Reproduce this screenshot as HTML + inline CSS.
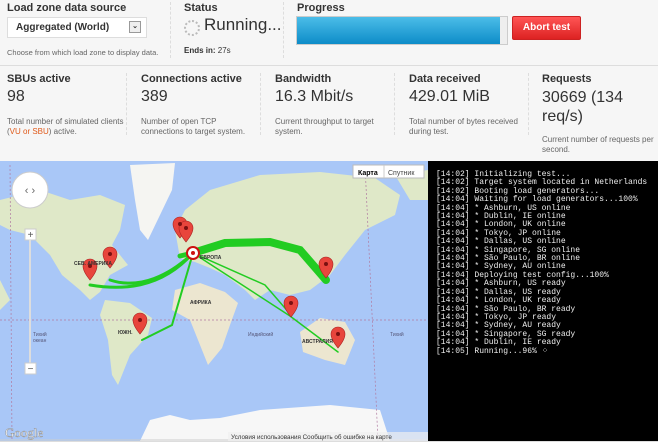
<!DOCTYPE html>
<html><head><meta charset="utf-8"><style>
*{margin:0;padding:0;box-sizing:border-box}
body{width:658px;height:447px;overflow:hidden;background:#f6f6f6;font-family:"Liberation Sans",Arial,sans-serif;color:#333;position:relative}
.a{position:absolute}
.h{font-size:11px;font-weight:bold;color:#333}
.s{font-size:8px;color:#666;line-height:10px}
.v{font-size:16px;color:#333}
.vl{border-left:1px dashed #ddd}
pre{font-family:"Liberation Mono",monospace;font-size:8px;line-height:8.4px;color:#eee}
</style></head><body>
<div class="a h" style="left:7px;top:2px">Load zone data source</div>
<div class="a" style="left:7px;top:17px;width:140px;height:21px;background:#fff;border:1px solid #ddd;font-size:10px;font-weight:bold;padding:4px 0 0 8px">Aggregated (World)
<div class="a" style="left:121px;top:3px;width:12px;height:12px;border:1px solid #999;background:#eee;font-size:7px;text-align:center;line-height:10px">&#8964;</div></div>
<div class="a s" style="left:7px;top:48px;font-size:7.5px">Choose from which load zone to display data.</div>
<div class="a vl" style="left:170px;top:2px;height:56px"></div>
<div class="a h" style="left:184px;top:2px">Status</div>
<div class="a" style="left:184px;top:20px;width:16px;height:16px;border:2px dotted #bbb;border-radius:50%"></div>
<div class="a" style="left:204px;top:15px;font-size:17px;color:#333">Running...</div>
<div class="a" style="left:184px;top:46px;font-size:8px;font-weight:bold">Ends in: <span style="font-weight:normal">27s</span></div>
<div class="a vl" style="left:283px;top:2px;height:56px"></div>
<div class="a h" style="left:297px;top:2px">Progress</div>
<div class="a" style="left:296px;top:16px;width:212px;height:29px;background:#eee;border:1px solid #ccc"><div style="width:203px;height:27px;background:linear-gradient(#4bbde8,#0d8cc8)"></div></div>
<div class="a" style="left:512px;top:16px;width:69px;height:24px;background:linear-gradient(#f55,#d22);border:1px solid #c22;border-radius:2px;color:#fff;font-size:10px;font-weight:bold;text-align:center;line-height:22px">Abort test</div>
<div class="a" style="left:0;top:65px;width:658px;height:1px;background:#ddd"></div>

<div class="a h" style="left:7px;top:73px">SBUs active</div>
<div class="a v" style="left:7px;top:88px">98</div>
<div class="a s" style="left:7px;top:117px">Total number of simulated clients<br>(<span style="color:#e05a1a">VU or SBU</span>) active.</div>
<div class="a vl" style="left:126px;top:73px;height:62px"></div>
<div class="a h" style="left:141px;top:73px">Connections active</div>
<div class="a v" style="left:141px;top:88px">389</div>
<div class="a s" style="left:141px;top:117px">Number of open TCP<br>connections to target system.</div>
<div class="a vl" style="left:260px;top:73px;height:62px"></div>
<div class="a h" style="left:275px;top:73px">Bandwidth</div>
<div class="a v" style="left:275px;top:88px">16.3 Mbit/s</div>
<div class="a s" style="left:275px;top:117px">Current throughput to target<br>system.</div>
<div class="a vl" style="left:394px;top:73px;height:62px"></div>
<div class="a h" style="left:409px;top:73px">Data received</div>
<div class="a v" style="left:409px;top:88px">429.01 MiB</div>
<div class="a s" style="left:409px;top:117px">Total number of bytes received<br>during test.</div>
<div class="a vl" style="left:528px;top:73px;height:62px"></div>
<div class="a h" style="left:542px;top:73px">Requests</div>
<div class="a v" style="left:542px;top:88px;line-height:19px">30669 (134<br>req/s)</div>
<div class="a s" style="left:542px;top:135px">Current number of requests per<br>second.</div>

<svg class="a" style="left:0;top:161px" width="428" height="280" viewBox="0 161 428 280">
<rect x="0" y="161" width="428" height="280" fill="#a9c7f7"/>
<g fill="#dfe8c8">
<path d="M0 200 L40 190 L70 200 L100 195 L125 205 L120 230 L112 245 L128 265 L110 275 L100 292 L90 300 L80 290 L62 275 L50 255 L30 235 L10 230 L0 225Z"/>
<path d="M130 165 L175 163 L172 190 L160 215 L148 240 L140 230 L135 200Z" fill="#f5f5f2"/>
<path d="M105 300 L130 303 L152 318 L148 335 L130 355 L118 385 L112 375 L108 340 L100 315Z"/>
<path d="M175 290 L200 283 L225 292 L238 303 L230 325 L222 348 L208 365 L198 340 L190 320 L172 310Z" fill="#ece6d0"/>
<path d="M175 230 L185 210 L210 190 L260 175 L320 172 L375 178 L400 195 L395 215 L365 230 L345 255 L330 275 L310 290 L290 295 L270 290 L255 300 L245 290 L225 275 L210 268 L195 262 L180 258Z"/>
<path d="M300 332 L320 318 L345 322 L355 340 L345 365 L325 360 L303 352Z" fill="#ece6d0"/>
<path d="M395 175 L428 170 L428 200 L410 200Z"/>
<path d="M0 280 L10 300 L0 310Z"/>
</g>
<path d="M140 441 L150 420 L170 415 L190 420 L220 418 L260 410 L330 405 L380 410 L390 441Z" fill="#f7f7f7"/>
<path d="M0 440 L428 440" stroke="#ccc"/>
<g stroke="#b07aa0" stroke-dasharray="2,2" fill="none" stroke-width=".7"><path d="M0 320 L428 320"/><path d="M10 165 L12 441"/><path d="M365 165 L378 441"/></g>
<g stroke="#2c2" fill="none" stroke-linecap="round">
<path d="M193 253 L225 243 L270 242 L300 250 L326 280" stroke-width="8"/>
<path d="M193 253 L180 256" stroke-width="5"/>
<path d="M193 253 C170 275 140 290 110 280" stroke-width="3"/>
<path d="M193 253 C160 290 120 290 90 285" stroke-width="3"/>
<path d="M193 253 L172 325 L142 340" stroke-width="2"/>
<path d="M193 253 L265 285 L291 315" stroke-width="1.5"/>
<path d="M193 253 L290 316 L338 352" stroke-width="1.5"/>
</g>
<g fill="#e8453c" stroke="#a22" stroke-width=".6">
<path id="p" d="M0 0 C-5 -6 -7 -10 -7 -14 A7 7 0 0 1 7 -14 C7 -10 5 -6 0 0Z" transform="translate(90 280)"/>
<use href="#p" transform="translate(20 -12)"/>
<use href="#p" transform="translate(90 -42)"/>
<use href="#p" transform="translate(96 -38)"/>
<use href="#p" transform="translate(236 -2)"/>
<use href="#p" transform="translate(201 37)"/>
<use href="#p" transform="translate(50 54)"/>
<use href="#p" transform="translate(248 68)"/>
</g>
<g fill="#7a1010"><circle cx="90" cy="266" r="2"/><circle cx="110" cy="254" r="2"/><circle cx="180" cy="224" r="2"/><circle cx="186" cy="228" r="2"/><circle cx="326" cy="264" r="2"/><circle cx="291" cy="303" r="2"/><circle cx="140" cy="320" r="2"/><circle cx="338" cy="334" r="2"/></g>
<circle cx="193" cy="253" r="6" fill="#fff" stroke="#c11" stroke-width="2"/><circle cx="193" cy="253" r="2" fill="#c11"/>
<g font-size="5" font-weight="bold" fill="#333" font-family="Liberation Sans"><text x="190" y="304">АФРИКА</text><text x="74" y="265">СЕВ. АМЕРИКА</text><text x="302" y="343">АВСТРАЛИЯ</text><text x="118" y="334">ЮЖН.</text><text x="200" y="259">ЕВРОПА</text></g>
<g font-size="5" fill="#557" font-family="Liberation Sans"><text x="33" y="336">Тихий</text><text x="33" y="342">океан</text><text x="248" y="336">Индийский</text><text x="390" y="336">Тихий</text></g>
<circle cx="30" cy="190" r="18" fill="#fff" stroke="#ccc"/>
<text x="30" y="194" text-anchor="middle" font-size="11" fill="#666">‹ ›</text>
<rect x="25" y="229" width="11" height="11" fill="#fff" stroke="#ccc"/><text x="30.5" y="238" text-anchor="middle" font-size="10" fill="#555">+</text>
<rect x="29" y="240" width="2" height="123" fill="#ddd"/>
<rect x="25" y="363" width="11" height="11" fill="#fff" stroke="#ccc"/><text x="30.5" y="372" text-anchor="middle" font-size="10" fill="#555">−</text>
<text x="5" y="437" font-size="13" fill="#fff" stroke="#999" stroke-width=".5" font-family="Liberation Serif">Google</text>
<rect x="353" y="165" width="71" height="13" fill="#fff" stroke="#bbb"/><line x1="384" y1="165" x2="384" y2="178" stroke="#ccc"/>
<text x="358" y="175" font-size="7" font-weight="bold" fill="#000">Карта</text><text x="388" y="175" font-size="7" fill="#444">Спутник</text>
<rect x="228" y="432" width="200" height="9" fill="#f0f0f0" opacity=".7"/>
<text x="231" y="439" font-size="6.3" fill="#333">Условия использования   Сообщить об ошибке на карте</text>
</svg>
<div class="a" style="left:428px;top:161px;width:230px;height:280px;background:#000;padding:10px 0 0 8px"><pre>[14:02] Initializing test...
[14:02] Target system located in Netherlands
[14:02] Booting load generators...
[14:04] Waiting for load generators...100%
[14:04] * Ashburn, US online
[14:04] * Dublin, IE online
[14:04] * London, UK online
[14:04] * Tokyo, JP online
[14:04] * Dallas, US online
[14:04] * Singapore, SG online
[14:04] * São Paulo, BR online
[14:04] * Sydney, AU online
[14:04] Deploying test config...100%
[14:04] * Ashburn, US ready
[14:04] * Dallas, US ready
[14:04] * London, UK ready
[14:04] * São Paulo, BR ready
[14:04] * Tokyo, JP ready
[14:04] * Sydney, AU ready
[14:04] * Singapore, SG ready
[14:04] * Dublin, IE ready
[14:05] Running...96% ⁘</pre></div>
<div class="a" style="left:0;top:441px;width:658px;height:6px;background:#fff;border-top:1px solid #ddd"></div>
</body></html>
